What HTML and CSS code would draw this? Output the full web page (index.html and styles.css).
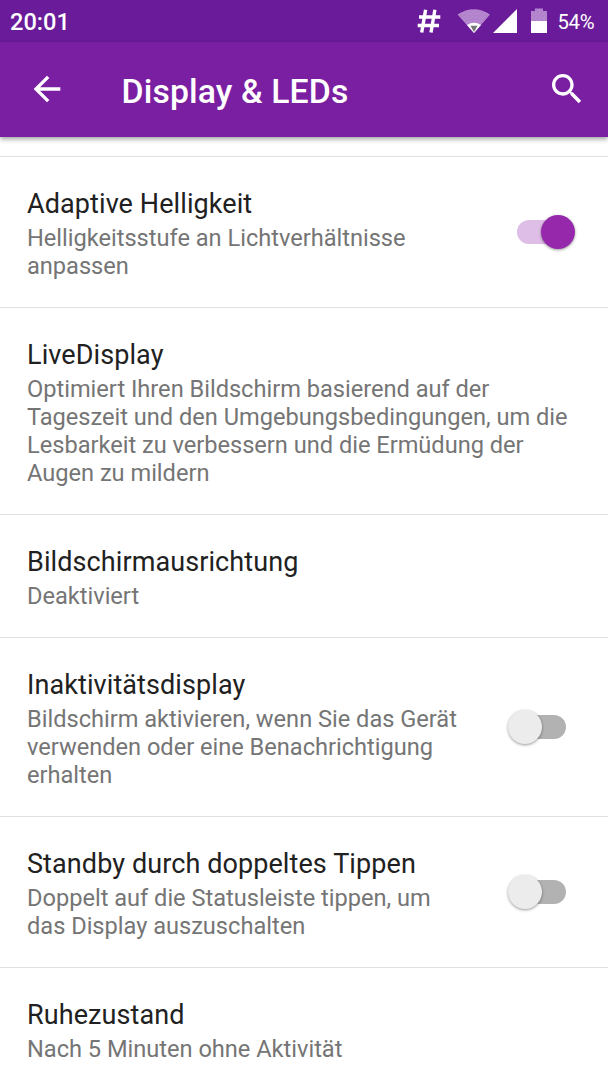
FILE: index.html
```html
<!DOCTYPE html>
<html lang="de">
<head>
<meta charset="utf-8">
<title>Display &amp; LEDs</title>
<link rel="stylesheet" href="styles.css">
</head>
<body>
<div class="status">
  <span class="clock">20:01</span>
  <svg class="status-icons" width="150" height="42" viewBox="0 0 150 42">
    <defs>
      <pattern id="dither" width="4" height="4" patternUnits="userSpaceOnUse">
        <rect width="4" height="4" fill="#b282cd"/>
        <path d="M0 0h1v1H0zM2 2h1v1H2zM3 1h1v1H3z" fill="#bb90d3"/>
      </pattern>
    </defs>
    <path d="M25.600 9.800 21.700 32.500M34.900 9.800 31 32.500M19 17h21.300M17.700 25.500h21.300" fill="none" stroke="#fff" stroke-width="3.400"/>
    <path d="M57.500 14.500Q74 4 90 14.500L74 33z" fill="url(#dither)"/>
    <path d="M67 25Q74 20.500 81 25L74 33z" fill="#fff"/>
    <path d="M70.500 25.700h7L74 32z" fill="#777"/>
    <path d="M117 9v24H93z" fill="#fff"/>
    <path d="M131 11h4V8.500h8V11h4v10h-16z" fill="url(#dither)"/>
    <path d="M131 21h16v12h-16z" fill="#fff"/>
  </svg>
  <span class="percent">54%</span>
</div>
<header class="toolbar">
  <svg class="back" width="40" height="40" viewBox="0 0 24 24"><path d="M20 11H7.830l5.590-5.590L12 4l-8 8 8 8 1.410-1.410L7.830 13H20v-2z" fill="#fff"/></svg>
  <h1 class="heading">Display &amp; LEDs</h1>
  <svg class="search" width="40" height="40" viewBox="0 0 24 24"><path d="M15.500 14h-.79l-.28-.27C15.410 12.590 16 11.110 16 9.500 16 5.910 13.090 3 9.500 3S3 5.910 3 9.500 5.910 16 9.500 16c1.610 0 3.090-.59 4.230-1.570l.27.28v.79l5 4.990L20.490 19l-4.990-5zm-6 0C7.010 14 5 11.990 5 9.500S7.010 5 9.500 5 14 7.010 14 9.500 11.990 14 9.500 14z" fill="#fff"/></svg>
</header>
<main class="list">
  <section class="row">
    <div class="text"><h2 class="title">Adaptive Helligkeit</h2>
    <p class="summary">Helligkeitsstufe an Lichtverhältnisse<br>anpassen</p></div>
    <span class="switch on"><span class="thumb"></span></span>
  </section>
  <section class="row">
    <div class="text"><h2 class="title">LiveDisplay</h2>
    <p class="summary">Optimiert Ihren Bildschirm basierend auf der<br>Tageszeit und den Umgebungsbedingungen, um die<br>Lesbarkeit zu verbessern und die Ermüdung der<br>Augen zu mildern</p></div>
  </section>
  <section class="row">
    <div class="text"><h2 class="title">Bildschirmausrichtung</h2>
    <p class="summary">Deaktiviert</p></div>
  </section>
  <section class="row">
    <div class="text"><h2 class="title">Inaktivitätsdisplay</h2>
    <p class="summary">Bildschirm aktivieren, wenn Sie das Gerät<br>verwenden oder eine Benachrichtigung<br>erhalten</p></div>
    <span class="switch"><span class="thumb"></span></span>
  </section>
  <section class="row">
    <div class="text"><h2 class="title">Standby durch doppeltes Tippen</h2>
    <p class="summary">Doppelt auf die Statusleiste tippen, um<br>das Display auszuschalten</p></div>
    <span class="switch"><span class="thumb"></span></span>
  </section>
  <section class="row">
    <div class="text"><h2 class="title">Ruhezustand</h2>
    <p class="summary">Nach 5 Minuten ohne Aktivität</p></div>
  </section>
</main>
</body>
</html>
```
FILE: styles.css
```css
* { box-sizing: border-box; }
body {
  margin: 0;
  width: 608px;
  height: 1080px;
  overflow: hidden;
  background: #fff;
  font-family: Roboto, sans-serif;
}
h1, h2, p { margin: 0; }
.status {
  display: flex;
  align-items: center;
  height: 42px;
  padding-left: 10px;
  background: #6a1b9a;
  color: #fff;
}
.clock {
  width: 390px;
  font-size: 23.640px;
  font-weight: 500;
  line-height: 28px;
  padding-top: 2px;
}
.status-icons { flex: none; }
.percent {
  padding: 2px 0 0 7.500px;
  font-size: 20.300px;
  letter-spacing: -.3px;
  line-height: 24px;
}
.toolbar {
  position: relative;
  display: flex;
  align-items: center;
  height: 95px;
  padding: 0 21px 0 27px;
  background: #7b1fa2;
  color: #fff;
  box-shadow: 0 2px 5px rgba(0, 0, 0, .38);
}
.back, .search {
  flex: none;
  margin-bottom: 1px;
}
.heading {
  flex: 1;
  padding: 5px 0 0 54.500px;
  font-size: 33.780px;
  font-weight: 500;
  letter-spacing: .12px;
  line-height: 40px;
  white-space: nowrap;
}
.list { padding-top: 19px; }
.row {
  display: flex;
  align-items: center;
  padding: 31px 33px 27px 27px;
  border-top: 1px solid #e0e0e0;
}
.text { flex: 1; white-space: nowrap; }
.title {
  margin-bottom: 4px;
  color: #212121;
  font-size: 27px;
  font-weight: 400;
  letter-spacing: .09px;
  line-height: 32px;
}
.summary {
  color: #757575;
  font-size: 23.640px;
  letter-spacing: -.02px;
  line-height: 28px;
}
.switch {
  display: flex;
  align-items: center;
  flex: none;
  width: 49px;
  height: 24px;
  margin: 0 9px 4px 0;
  border-radius: 12px;
  background: #b2b2b2;
}
.thumb {
  width: 34px;
  height: 34px;
  flex: none;
  margin-left: -9.500px;
  border-radius: 50%;
  background: #ececec;
  box-shadow: 0 1px 3px rgba(0, 0, 0, .4);
}
.switch.on { background: #debde6; }
.on .thumb { margin-left: 24px; background: #9628ac; }
```
